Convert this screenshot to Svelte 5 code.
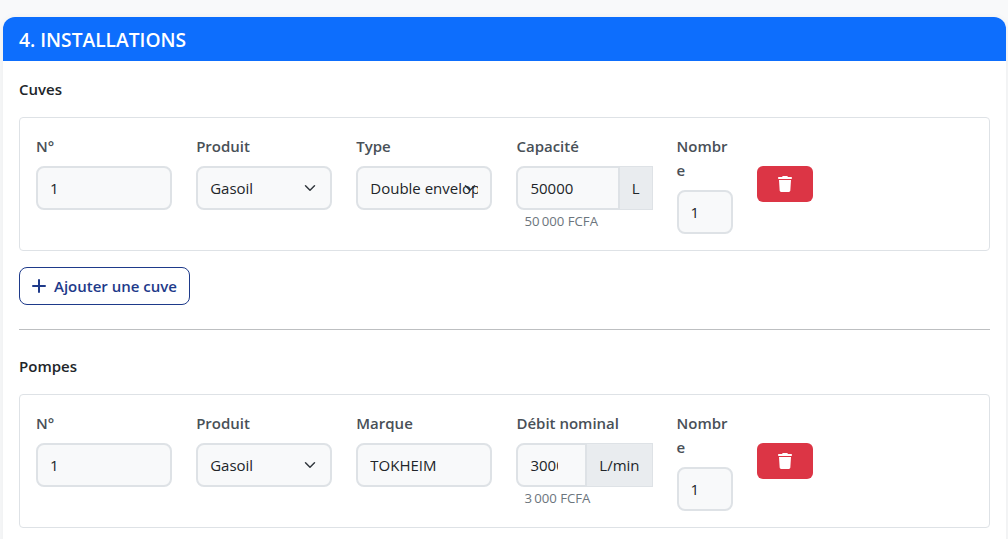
<script>
  const cuves = [{ num: 1, produit: 'Gasoil', type: 'Double enveloppe', capacite: 50000, nombre: 1 }];
  const pompes = [{ num: 1, produit: 'Gasoil', marque: 'TOKHEIM', debit: 3000, nombre: 1 }];
  const produits = ['Gasoil', 'Super', 'Pétrole'];
  const types = ['Simple enveloppe', 'Double enveloppe'];
  const fcfa = (n) => n.toLocaleString('fr-FR').replace(/\s/g, '\u2009') + ' FCFA';
</script>

{#snippet trash()}
  <button class="btn-delete" type="button" aria-label="Supprimer">
    <svg viewBox="0 0 448 512" width="14" height="16" fill="currentColor">
      <path d="M135.2 17.7L128 32H32C14.3 32 0 46.3 0 64S14.3 96 32 96H416c17.7 0 32-14.3 32-32s-14.3-32-32-32H320l-7.2-14.3C307.4 6.8 296.3 0 284.2 0H163.8c-12.1 0-23.2 6.8-28.6 17.7zM416 128H32L53.2 467c1.6 25.3 22.6 45 47.9 45H346.9c25.3 0 46.3-19.7 47.9-45L416 128z" />
    </svg>
  </button>
{/snippet}

{#snippet produitField(value)}
  <div class="field">
    <span class="label">Produit</span>
    <select {value}>
      {#each produits as p}
        <option>{p}</option>
      {/each}
    </select>
  </div>
{/snippet}

{#snippet numField(value)}
  <div class="field">
    <span class="label">N°</span>
    <input type="text" {value} />
  </div>
{/snippet}

{#snippet nombreField(value)}
  <div class="field nombre">
    <span class="label">Nombre</span>
    <input type="number" {value} />
  </div>
{/snippet}

<main>
  <section class="card">
    <h2 class="card-header">4. INSTALLATIONS</h2>
    <div class="card-body">
      <h3>Cuves</h3>
      {#each cuves as c}
        <div class="row-box">
          {@render numField(c.num)}
          {@render produitField(c.produit)}
          <div class="field">
            <span class="label">Type</span>
            <select value={c.type}>
              {#each types as t}
                <option>{t}</option>
              {/each}
            </select>
          </div>
          <div class="field">
            <span class="label">Capacité</span>
            <div class="group">
              <input type="number" value={c.capacite} />
              <span class="addon">L</span>
            </div>
            <small>{fcfa(c.capacite)}</small>
          </div>
          {@render nombreField(c.nombre)}
          {@render trash()}
        </div>
      {/each}
      <button class="btn-add" type="button">
        <svg viewBox="0 0 14 14" width="14" height="14" fill="none" stroke="currentColor" stroke-width="2" stroke-linecap="round">
          <path d="M7 1v12M1 7h12" />
        </svg>
        Ajouter une cuve
      </button>

      <hr />

      <h3>Pompes</h3>
      {#each pompes as p}
        <div class="row-box">
          {@render numField(p.num)}
          {@render produitField(p.produit)}
          <div class="field">
            <span class="label">Marque</span>
            <input type="text" value={p.marque} />
          </div>
          <div class="field">
            <span class="label">Débit nominal</span>
            <div class="group">
              <input type="number" value={p.debit} />
              <span class="addon">L/min</span>
            </div>
            <small>{fcfa(p.debit)}</small>
          </div>
          {@render nombreField(p.nombre)}
          {@render trash()}
        </div>
      {/each}
    </div>
  </section>
</main>

<style>
  :global(html), :global(body) {
    height: 539px;
    overflow: hidden;
  }

  :global(body) {
    background: #f8f9fa;
    color: #212529;
    font-family: "Open Sans", "Noto Sans", sans-serif;
  }

  main {
    padding: 17px 2px 0 3px;
  }

  .card {
    background: #fff;
    border-radius: 12px;
    box-shadow: 0 2px 8px rgba(0, 0, 0, 0.06);
    overflow: hidden;
  }

  .card-header {
    margin: 0;
    height: 44px;
    padding: 0 16px;
    background: #0d6efd;
    color: #fff;
    font-size: 19.2px;
    font-weight: 600;
    line-height: 45px;
  }

  .card-body {
    padding: 16px;
  }

  h3 {
    margin: 0 0 16px;
    font-size: 15px;
    font-weight: 600;
    line-height: 24px;
  }

  .row-box {
    display: flex;
    align-items: flex-start;
    gap: 24px;
    padding: 16px;
    height: 134px;
    box-sizing: border-box;
    margin-bottom: 16px;
    border: 1px solid #dee2e6;
    border-radius: 4px;
  }

  .field {
    display: flex;
    flex-direction: column;
    width: 136.15px;
  }

  .field.nombre {
    width: 56.2px;
  }

  .label {
    margin-bottom: 8px;
    color: #495057;
    font-size: 15px;
    font-weight: 600;
    line-height: 24px;
    overflow-wrap: anywhere;
  }

  input, select {
    box-sizing: border-box;
    width: 100%;
    height: 44px;
    padding: 0 12px;
    border: 2px solid #dee2e6;
    border-radius: 8px;
    background-color: #f8f9fa;
    color: #212529;
    font-family: inherit;
    font-size: 15px;
    min-width: 0;
  }

  select {
    appearance: none;
    background-image: url("data:image/svg+xml,%3csvg xmlns='http://www.w3.org/2000/svg' viewBox='0 0 16 16'%3e%3cpath fill='none' stroke='%23343a40' stroke-linecap='round' stroke-linejoin='round' stroke-width='2' d='m2 5 6 6 6-6'/%3e%3c/svg%3e");
    background-repeat: no-repeat;
    background-position: right 12px center;
    background-size: 16px 12px;
  }

  .group {
    display: flex;
  }

  .group input {
    flex: 1 1 0;
    border-radius: 8px 0 0 8px;
  }

  .addon {
    display: flex;
    align-items: center;
    padding: 0 12px;
    border: 1px solid #dee2e6;
    border-left: 0;
    background: #e9ecef;
    font-size: 15px;
  }

  small {
    margin: 2px 0 0 8px;
    color: #6c757d;
    font-size: 13.2px;
    line-height: 18px;
  }

  .btn-delete {
    display: flex;
    align-items: center;
    justify-content: center;
    width: 56px;
    height: 36px;
    margin-top: 32px;
    padding: 0;
    border: 0;
    border-radius: 6px;
    background: #dc3545;
    color: #fff;
  }

  .btn-add {
    display: flex;
    align-items: center;
    gap: 8px;
    height: 38px;
    padding: 0 12px;
    border: 1px solid #1e3a8a;
    border-radius: 8px;
    background: #fff;
    color: #1e3a8a;
    font-family: inherit;
    font-size: 15px;
    font-weight: 600;
  }

  hr {
    margin: 24px 0;
    border: 0;
    border-top: 1px solid #bdbfc1;
  }
</style>
